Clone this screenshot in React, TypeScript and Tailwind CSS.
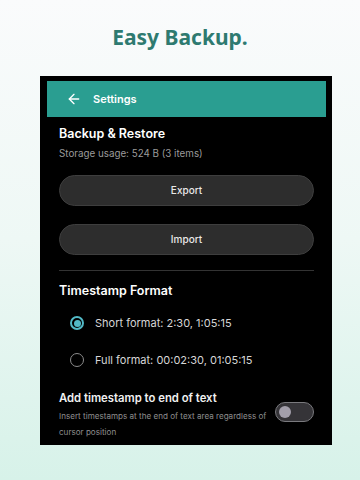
import React, { useState } from 'react';
import { ArrowLeft } from 'lucide-react';

const App: React.FC = () => {
  const [format, setFormat] = useState<'short' | 'full'>('short');
  const [atEnd, setAtEnd] = useState(false);

  return (
    <div className="w-[360px] h-[480px] overflow-hidden bg-gradient-to-b from-[#fafbfc] via-[#eef8f5] to-[#d7f2e9] font-['Inter',sans-serif]">
      {/* Title */}
      <div className="h-[76px] pt-[22px] text-center">
        <h1 className="font-['Noto_Sans',sans-serif] text-[21px] leading-[30px] font-bold text-[#2e7a70]">
          Easy Backup.
        </h1>
      </div>

      {/* Phone screen */}
      <div className="ml-[40px] w-[292px] h-[369px] bg-black pt-[5px] pl-[7px] pr-[6px]">
        <div className="h-[36px] bg-[#2a9e91] flex items-center pl-[19px] gap-[11px]">
          <ArrowLeft className="h-[16px] w-[16px] text-white" strokeWidth={2} />
          <span className="text-[11px] font-semibold text-white">Settings</span>
        </div>

        <div className="pl-[12px] pr-[12px]">
          {/* Backup & Restore */}
          <h2 className="mt-[8px] text-[12.5px] leading-[18px] font-semibold text-white">Backup &amp; Restore</h2>
          <p className="mt-[4px] text-[9.8px] leading-[14px] text-[#9b9b9b]">Storage usage: 524 B (3 items)</p>

          <button className="mt-[14px] w-full h-[31px] rounded-full bg-[#2d2d2d] border border-[#3e3e3e] text-[10px] font-medium text-[#e8e8e8]">
            Export
          </button>
          <button className="mt-[18px] w-full h-[31px] rounded-full bg-[#2d2d2d] border border-[#3e3e3e] text-[10px] font-medium text-[#e8e8e8]">
            Import
          </button>

          <div className="mt-[15px] h-px bg-[#333333]" />

          {/* Timestamp Format */}
          <h2 className="mt-[11px] text-[12.5px] leading-[18px] font-semibold text-white">Timestamp Format</h2>

          <div className="mt-[11px] h-[24px] flex items-center pl-[11px] gap-[11px]" onClick={() => setFormat('short')}>
            <Radio checked={format === 'short'} />
            <span className="text-[11px] text-[#d6d6d6]">Short format: 2:30, 1:05:15</span>
          </div>
          <div className="mt-[13px] h-[24px] flex items-center pl-[11px] gap-[11px]" onClick={() => setFormat('full')}>
            <Radio checked={format === 'full'} />
            <span className="text-[11px] text-[#d6d6d6]">Full format: 00:02:30, 01:05:15</span>
          </div>

          {/* Add timestamp */}
          <div className="mt-[18px] flex items-start justify-between">
            <div className="w-[212px]">
              <p className="text-[11.3px] leading-[16px] font-semibold text-[#f0f0f0]">Add timestamp to end of text</p>
              <p className="mt-[2px] text-[8.1px] leading-[16px] text-[#8e8e8e]">
                Insert timestamps at the end of text area regardless of cursor position
              </p>
            </div>
            <button
              onClick={() => setAtEnd(!atEnd)}
              className="mt-[12px] w-[39px] h-[20px] rounded-full bg-[#353438] border-[1.5px] border-[#7a7a7e] flex items-center px-[3px]"
            >
              <span className={`h-[12px] w-[12px] rounded-full bg-[#a39fab] ${atEnd ? 'ml-auto' : ''}`} />
            </button>
          </div>
        </div>
      </div>
    </div>
  );
};

const Radio: React.FC<{ checked: boolean }> = ({ checked }) =>
  checked ? (
    <span className="h-[14px] w-[14px] rounded-full border-[2px] border-[#52b9c6] flex items-center justify-center">
      <span className="h-[7px] w-[7px] rounded-full bg-[#52b9c6]" />
    </span>
  ) : (
    <span className="h-[14px] w-[14px] rounded-full border-[1.5px] border-[#8c8c8c]" />
  );

export default App;
